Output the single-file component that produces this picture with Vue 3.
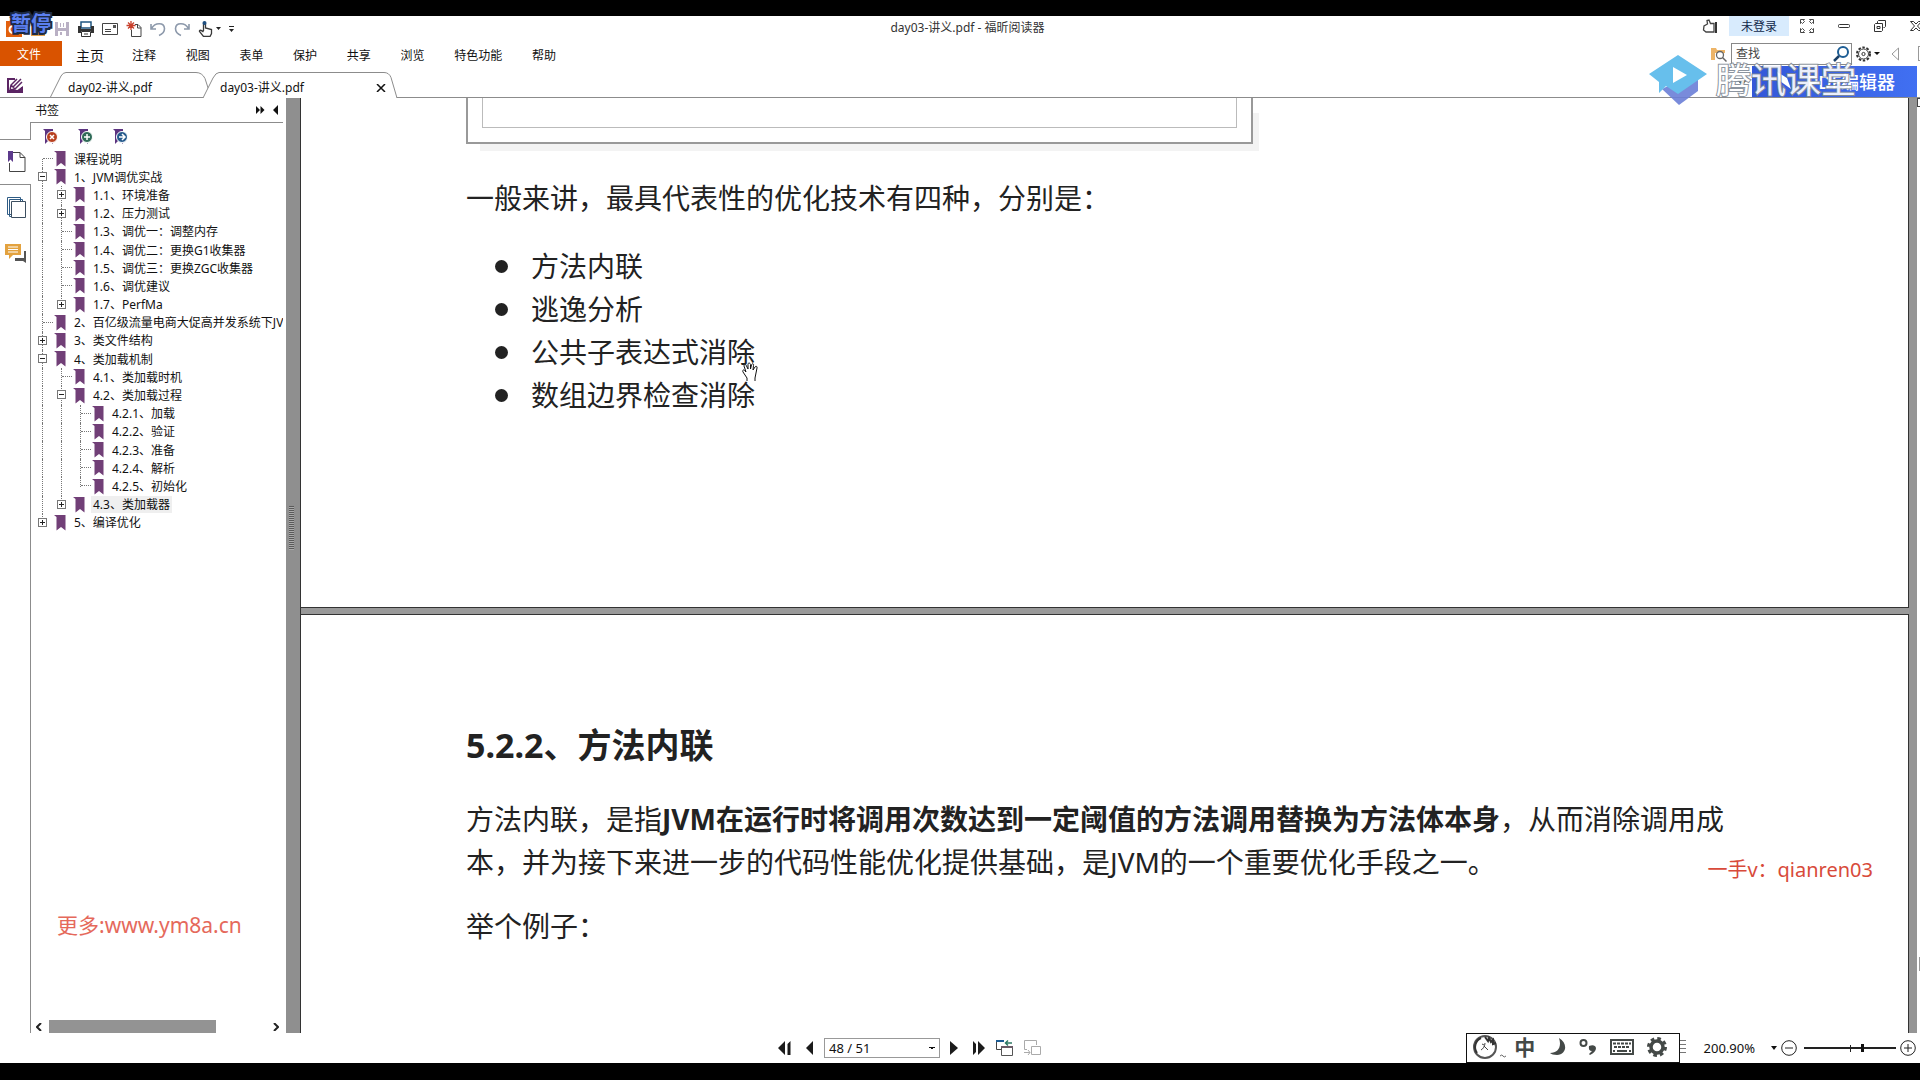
<template>
  <div class="screen">
    <div class="player-status">暂停</div>

    <header class="titlebar">
      <div class="quick">
        <button class="icon-btn logo" aria-label="Foxit">
          <svg width="16" height="16" viewBox="0 0 16 16"><rect width="16" height="16" fill="#e2600c" /><path d="M12 5H7a3 3 0 0 0 0 7h3V9" fill="none" stroke="#fff" stroke-width="2" /></svg>
        </button>
        <button class="icon-btn" aria-label="打开">
          <svg width="16" height="16" viewBox="0 0 16 16"><path d="M1 2h5l2 2h7v11H1z" fill="#e0a04a" /></svg>
        </button>
        <button class="icon-btn" aria-label="保存">
          <svg width="16" height="16" viewBox="0 0 16 16"><path d="M1 1h14v14H1z" fill="#b9b0c4" /><path d="M4 1h8v6H4zM4 10h8v5H4z" fill="#fff" /><path d="M6 2h1v4H6zM9 2h1v4H9zM6 11h2v3H6z" fill="#b9b0c4" /></svg>
        </button>
        <button class="icon-btn" aria-label="打印">
          <svg width="16" height="16" viewBox="0 0 16 16"><path d="M3 1h10v6H3z" fill="#fff" stroke="#1f5580" stroke-width="1.5" /><path d="M0 5h3v3h10V5h3v7h-3v-2H3v2H0z" fill="#333" /><path d="M3.500 10.500h9v5h-9zM6 13h4" fill="#fff" stroke="#333" /></svg>
        </button>
        <button class="icon-btn" aria-label="邮件">
          <svg width="16" height="16" viewBox="0 0 16 16"><path d="M.5 2.500h15v11H.5zM3 8.500h6M3 10.500h6" fill="none" stroke="#444" /><path d="M11 4h3v3h-3z" fill="#555" /></svg>
        </button>
        <button class="icon-btn" aria-label="新建">
          <svg width="16" height="16" viewBox="0 0 16 16"><path d="M9 3.500h3l3 3v9H5.500V9M11.500 3.500v3.500H15" fill="none" stroke="#444" /><path d="M5 0v9M.5 4.500h9M2 1.500l6 6M8 1.500l-6 6" stroke="#c8402c" stroke-width="1.300" /></svg>
        </button>
        <button class="icon-btn" aria-label="撤销">
          <svg width="16" height="16" viewBox="0 0 16 16"><path d="M1 3v5h5M1.500 7.500C5 1.500 14 1 14.500 7.500c0 4-3 6-5.500 7" fill="none" stroke="#8d99ab" stroke-width="1.600" /></svg>
        </button>
        <button class="icon-btn" aria-label="重做">
          <svg width="16" height="16" viewBox="0 0 16 16"><path d="M15 3v5h-5M14.500 7.500C11 1.500 2 1 1.500 7.500c0 4 3 6 5.500 7" fill="none" stroke="#8d99ab" stroke-width="1.600" /></svg>
        </button>
        <button class="icon-btn hand" aria-label="手型">
          <svg width="24" height="16" viewBox="0 0 24 16"><path d="M5.500 10V2.500c0-1.500 2-1.500 2 0V7l6 1.500v4L12 15.500H5.500L1.500 10.500C1 9 3 8.500 5.500 11" fill="#fff" stroke="#3a3a3a" stroke-width="1.300" /><circle cx="6.500" cy="2" r="2" fill="#1d4e80" /><path d="M18 6h5l-2.500 3z" fill="#222" /></svg>
        </button>
        <button class="icon-btn more" aria-label="更多">
          <svg width="8" height="16" viewBox="0 0 8 16"><path d="M1 5.500h5" stroke="#222" /><path d="M1 8h5l-2.500 3z" fill="#222" /></svg>
        </button>
      </div>
      <h1 class="doc-title">day03-讲义.pdf - 福昕阅读器</h1>
      <div class="window-tools">
        <button class="icon-btn" aria-label="点赞">
          <svg width="16" height="16" viewBox="0 0 16 16"><path d="M4 14H12V5.500H8.500L7 2 5 2.500 5.500 6 2 8l-.5 4z" fill="none" stroke="#444" stroke-width="1.300" /><path d="M13 4h2v11h-2z" fill="#333" /></svg>
        </button>
        <button class="login">未登录</button>
        <button class="icon-btn" aria-label="全屏">
          <svg width="14" height="14" viewBox="0 0 14 14" fill="none" stroke="#444"><path d="M.5 4.500v-4h4l-1 1 1 1-2 2-1-1zM9.500.5h4v4l-1-1-1 1-2-2 1-1zM.5 9.500v4h4l-1-1 1-1-2-2-1 1zM13.500 9.500v4h-4l1-1-1-1 2-2 1 1z" /></svg>
        </button>
        <button class="icon-btn" aria-label="最小化">
          <svg width="12" height="14" viewBox="0 0 12 14"><rect x=".5" y="5.500" width="11" height="3" rx="1" fill="none" stroke="#333" /></svg>
        </button>
        <button class="icon-btn" aria-label="还原">
          <svg width="12" height="12" viewBox="0 0 12 12" fill="none" stroke="#333"><path d="M3.500 3V1.500l1-1h7v6l-1 1H9.500M.5 4.500l1-1h7v7l-1 1h-7zM3 6.500h3v2H3z" /></svg>
        </button>
        <button class="icon-btn" aria-label="关闭">
          <svg width="12" height="12" viewBox="0 0 12 12"><path d="M.5 1.500h3L6 4l2.500-2.500h3L7.500 6l4 4.500h-3L6 8l-2.500 2.500h-3L4.500 6z" fill="none" stroke="#333" /></svg>
        </button>
      </div>
    </header>

    <nav class="menubar">
      <button class="file-menu">文件</button>
      <button class="menu home">主页</button>
      <div class="menus">
        <button v-for="item in menus" :key="item" class="menu">{{ item }}</button>
      </div>
      <div class="search-area">
        <svg width="17" height="16" viewBox="0 0 17 16"><path d="M1 2h5l1 2h8v3H5v7H1z" fill="#edb467" /><circle cx="10" cy="9" r="3.500" fill="#fff" stroke="#666" stroke-width="1.300" /><path d="M12.500 11.500l4 4" stroke="#666" stroke-width="1.500" /></svg>
        <label class="search">
          <input v-model="keyword" type="text" placeholder="查找" aria-label="查找" />
          <svg width="16" height="16" viewBox="0 0 16 16"><circle cx="10" cy="6" r="5" fill="none" stroke="#1d5d94" stroke-width="2" /><path d="M6 10l-5 5" stroke="#1b4168" stroke-width="2.500" /></svg>
        </label>
        <button class="icon-btn" aria-label="设置">
          <svg width="24" height="16" viewBox="0 0 24 16"><circle cx="7.500" cy="8" r="6.500" fill="none" stroke="#333" stroke-width="2" stroke-dasharray="2.500 1.600" /><circle cx="7.500" cy="8" r="5" fill="#fff" stroke="#444" /><circle cx="7.500" cy="8" r="1.600" fill="none" stroke="#333" /><path d="M18 6h6l-3 3z" fill="#111" /></svg>
        </button>
        <svg class="prev-hit" width="8" height="14" viewBox="0 0 8 14"><path d="M7.500 1v12L1 7z" fill="none" stroke="#999" /></svg>
        <span class="next-hit"></span>
      </div>
    </nav>

    <div class="tabbar">
      <button class="icon-btn edit-pen" aria-label="编辑">
        <svg width="17" height="16" viewBox="0 0 17 16"><path d="M0 1h8v2H2v10h12v-3h2v6H0z" fill="#5b2463" /><path d="M3 13l1-5 6-6M8 12l7-7M4 8l4 4-5 1M6 10l8-8" fill="none" stroke="#5b2463" stroke-width="1.500" /><path d="M9 14l7-5v6H9z" fill="#5b2463" /></svg>
      </button>
      <button class="tab first">
        <svg width="162" height="25" viewBox="0 0 162 25"><path d="M.5 25L11 4Q13 .5 16 .5h130q6 0 9 6l6 18.500" fill="#fff" stroke="#8c8c8c" /></svg>
        <span>day02-讲义.pdf</span>
      </button>
      <button class="tab current">
        <svg width="195" height="26" viewBox="0 0 195 26"><path d="M0 26L10 6Q13 .5 16 .5h165q5 0 7 5l6 20.500" fill="#fff" stroke="#8c8c8c" /></svg>
        <span>day03-讲义.pdf</span>
        <svg class="close" width="10" height="8" viewBox="0 0 10 8"><path d="M1 0l8 8M9 0L1 8" stroke="#111" stroke-width="1.500" /></svg>
      </button>
      <svg class="tab-caret" width="10" height="5" viewBox="0 0 10 5"><path d="M0 0h10L5 5z" fill="#111" /></svg>
      <button class="editor-ad">
        <svg width="16" height="18" viewBox="0 0 16 18"><path d="M1 0l10 6 4 11L4 9z" fill="#fff" /></svg>
        <span>PDF编辑器</span>
      </button>
    </div>

    <main class="workspace">
      <aside class="sidebar">
        <div class="panel-head">
          <span>书签</span>
          <svg width="24" height="10" viewBox="0 0 24 10"><path d="M0 1l4 4-4 4zM4.500 1l4 4-4 4zM22 0v10l-5-5z" fill="#111" /></svg>
        </div>
        <div class="panel-body">
          <div class="strip">
            <div class="strip-top"></div>
            <button class="strip-btn selected" aria-label="书签">
              <svg width="20" height="22" viewBox="0 0 20 22"><path d="M4 1.500h9l5 5v14H2.500V12M13 1.500v5h5" fill="none" stroke="#444" /><path d="M1 0h5v11L3.500 8.500 1 11z" fill="#5c3a8c" /></svg>
            </button>
            <div class="strip-rest">
              <button class="strip-btn" aria-label="页面">
                <svg width="20" height="22" viewBox="0 0 20 22" fill="#fff" stroke="#2f5c85"><path d="M.5.5h13v17H.5zM2.500 2.500h13v17h-13z" /><path d="M4.500 4.500h14v16h-14z" stroke="#3d4f60" /></svg>
              </button>
              <button class="strip-btn comment" aria-label="注释">
                <svg width="22" height="22" viewBox="0 0 22 22"><path d="M0 1h16v11H8l-4 4v-4H0z" fill="#e3a23f" /><path d="M3 4h10M3 6.500h10M3 9h10" stroke="#fff" /><path d="M19 8h2v12l-3-2h-8v-3h9z" fill="#555" /></svg>
              </button>
            </div>
          </div>
          <div class="bookmarks">
            <div class="bookmark-tools">
              <button v-for="tool in bookmarkTools" :key="tool.name" class="icon-btn" :aria-label="tool.name">
                <svg width="15" height="16" viewBox="0 0 15 16"><path d="M0 0h10v15l-4-4-4 4V2z" fill="#5c3480" /><circle cx="9" cy="8" r="5.500" :fill="tool.color" stroke="#fff" /><path :d="tool.path" fill="none" stroke="#fff" stroke-width="1.500" /></svg>
              </button>
            </div>
            <ul class="tree">
              <li v-for="node in tree" :key="node.text">
                <span v-for="(mark, i) in node.marks" :key="i" class="guide" :class="guideClass[mark]"></span>
                <svg class="flag" width="12" height="16" viewBox="0 0 12 16"><path d="M0 0h11.500v15.500L7 12l-4.500 3.500V2z" fill="#713f77" /></svg>
                <span class="node-text" :class="{ picked: node.picked }">{{ node.text }}</span>
              </li>
            </ul>
            <div class="hscroll">
              <svg width="6" height="8" viewBox="0 0 6 8"><path d="M5 0L1 4l4 4" fill="none" stroke="#222" stroke-width="2" /></svg>
              <div class="track"><div class="thumb"></div></div>
              <svg width="6" height="8" viewBox="0 0 6 8"><path d="M1 0l4 4-4 4" fill="none" stroke="#222" stroke-width="2" /></svg>
            </div>
          </div>
        </div>
        <div class="watermark more-link">更多:www.ym8a.cn</div>
      </aside>

      <div class="splitter"><div class="grip"></div></div>

      <section class="viewer">
        <article class="page page-top">
          <div class="figure"><div class="figure-inner"></div></div>
          <p>一般来讲，最具代表性的优化技术有四种，分别是：</p>
          <ul class="points">
            <li v-for="point in points" :key="point">{{ point }}</li>
          </ul>
        </article>
        <article class="page page-next">
          <h2>5.2.2、方法内联</h2>
          <p>方法内联，是指<strong>JVM在运行时将调用次数达到一定阈值的方法调用替换为方法体本身</strong>，从而消除调用成本，并为接下来进一步的代码性能优化提供基础，是JVM的一个重要优化手段之一。</p>
          <p>举个例子：</p>
        </article>
        <svg class="grab" width="17" height="20" viewBox="0 0 17 20"><path d="M5 19v-3L1 10c-1-2 1-3 2-1l1 1-2-6c0-2 2-2 2.500 0L6 7V2.500c0-2 2-2 2.500 0V7l1-4c.5-2 2.500-1.500 2 .5L11 8l2-3c1-1.500 2.500-.5 2 1l-2 10v3" fill="#fff" stroke="#111" /></svg>
        <div class="watermark contact">一手v：qianren03</div>
      </section>
      <div class="vscroll"><span class="up"></span><span class="bar"></span></div>
    </main>

    <footer class="statusbar">
      <div class="pager">
        <button class="icon-btn" aria-label="首页"><svg width="14" height="14" viewBox="0 0 14 14"><path d="M7 0v14L0 7zM12.500 0v14h-3V3z" fill="#1b1b1b" /></svg></button>
        <button class="icon-btn step" aria-label="上一页"><svg width="8" height="14" viewBox="0 0 8 14"><path d="M7 0v14L0 7z" fill="#1b1b1b" /></svg></button>
        <select aria-label="页码"><option>48 / 51</option></select>
        <button class="icon-btn" aria-label="下一页"><svg width="8" height="14" viewBox="0 0 8 14"><path d="M0 0v14l8-7z" fill="#1b1b1b" /></svg></button>
        <button class="icon-btn step" aria-label="末页"><svg width="14" height="14" viewBox="0 0 14 14"><path d="M1 0l3 3v8l-3 3zM6 0v14l7-7z" fill="#1b1b1b" /></svg></button>
        <button class="icon-btn" aria-label="上一视图"><svg width="18" height="16" viewBox="0 0 18 16"><path d="M6 9.500H.5v-9H8" fill="none" stroke="#444" /><path d="M0 0h8v2H0z" fill="#1d5d94" /><path d="M5.500 6.500h11v9h-11z" fill="#fff" stroke="#555" /><path d="M5 6h12v2H5z" fill="#6a5a66" /><path d="M16 3H9.500M12 .5L9.500 3 12 5.500" fill="none" stroke="#2f7a66" stroke-width="1.500" /></svg></button>
        <button class="icon-btn" aria-label="下一视图"><svg width="18" height="16" viewBox="0 0 18 16" fill="none" stroke="#aaa"><path d="M3 9.500H.5v-9h12V5M7.500 6.500h9v8h-9zM0 12.500h6M4 10l2 2.500L4 15" /></svg></button>
      </div>
      <div class="ime">
        <svg width="34" height="24" viewBox="0 0 34 24"><circle cx="13" cy="12" r="11" fill="none" stroke="#555" stroke-width="2" /><path d="M5 18A10 10 0 0 1 9 3M13 2l3 4 1-3 2 4 2-2v4l3-1" fill="none" stroke="#333" stroke-width="2" /><path d="M10 9l2 1M13 8c0 3-2 6-4 7M12 11l4 4" fill="none" stroke="#444" /><path d="M28 21q2-2 3 0t3 0" fill="none" stroke="#666" /></svg>
        <span class="zh">中</span>
        <svg width="16" height="18" viewBox="0 0 16 18"><path d="M9 0c9 5 8 16-2 17-3 0-6-1-7-2 8 0 12-6 9-15z" fill="#444947" /></svg>
        <svg width="18" height="18" viewBox="0 0 18 18"><circle cx="4.500" cy="5" r="3" fill="none" stroke="#444947" stroke-width="2" /><path d="M10 8q6-2 7 2 0 4-6 7l-1-1 3-3q-4 0-3-5z" fill="#444947" /></svg>
        <svg width="24" height="16" viewBox="0 0 24 16"><path d="M1 1h22v14H1z" fill="#fff" stroke="#444947" stroke-width="2" /><path d="M3 4.500h18M4 8h16" stroke="#444947" stroke-width="2" stroke-dasharray="3 1" /><path d="M3 12h2M7 12h10M19 12h2" stroke="#444947" stroke-width="2" /></svg>
        <svg width="20" height="20" viewBox="0 0 20 20"><circle cx="10" cy="10" r="8.500" fill="none" stroke="#444947" stroke-width="3" stroke-dasharray="3.600 3.080" /><circle cx="10" cy="10" r="6" fill="none" stroke="#444947" stroke-width="3.500" /></svg>
      </div>
      <div class="ime-edge"></div>
      <label class="zoom-value" for="zoom">200.90%</label>
      <svg class="zoom-caret" width="6" height="4" viewBox="0 0 6 4"><path d="M0 0h6L3 4z" fill="#111" /></svg>
      <button class="icon-btn" aria-label="缩小"><svg width="16" height="16" viewBox="0 0 16 16" fill="none" stroke="#222"><circle cx="8" cy="8" r="7.300" /><path d="M4 8h8" /></svg></button>
      <input id="zoom" v-model="zoom" class="zoom-slider" type="range" min="0" max="100" />
      <button class="icon-btn zoom-in" aria-label="放大"><svg width="16" height="16" viewBox="0 0 16 16" fill="none" stroke="#222"><circle cx="8" cy="8" r="7.300" /><path d="M4 8h8M8 4v8" /></svg></button>
    </footer>

    <div class="brand">
      <svg width="58" height="50" viewBox="0 0 58 50">
        <path d="M13 34l16-8 20-4v14L30 50z" fill="#6b7fd8" />
        <path d="M29 0l29 19-29 20-12-8-7 7V27L0 19z" fill="#57b9ea" />
        <path d="M24 12v16l14-8z" fill="#fff" />
      </svg>
      <span>腾讯课堂</span>
    </div>
  </div>
</template>

<script setup>
import { ref } from 'vue';

const keyword = ref('');
const zoom = ref(64);

const menus = ['注释', '视图', '表单', '保护', '共享', '浏览', '特色功能', '帮助'];

const bookmarkTools = [
  { name: '删除书签', color: '#b8401f', path: 'M7 6l4 4M11 6l-4 4' },
  { name: '添加书签', color: '#2f6b58', path: 'M9 5v6M6 8h6' },
  { name: '展开书签', color: '#255a8c', path: 'M6 8h6M9 5l3 3-3 3' }
];

// one mark per indent level
const guideClass = {
  '|': ['line'],
  t: ['line', 'arm'],
  s: ['start', 'arm'],
  e: ['end', 'arm'],
  '+': ['line', 'toggle', 'plus'],
  '-': ['line', 'toggle'],
  x: ['end', 'toggle', 'plus']
};

const tree = [
  { marks: 's', text: '课程说明' },
  { marks: '-', text: '1、JVM调优实战' },
  { marks: '|+', text: '1.1、环境准备' },
  { marks: '|+', text: '1.2、压力测试' },
  { marks: '|t', text: '1.3、调优一：调整内存' },
  { marks: '|t', text: '1.4、调优二：更换G1收集器' },
  { marks: '|t', text: '1.5、调优三：更换ZGC收集器' },
  { marks: '|t', text: '1.6、调优建议' },
  { marks: '|x', text: '1.7、PerfMa' },
  { marks: 't', text: '2、百亿级流量电商大促高并发系统下JV' },
  { marks: '+', text: '3、类文件结构' },
  { marks: '-', text: '4、类加载机制' },
  { marks: '|t', text: '4.1、类加载时机' },
  { marks: '|-', text: '4.2、类加载过程' },
  { marks: '||t', text: '4.2.1、加载' },
  { marks: '||t', text: '4.2.2、验证' },
  { marks: '||t', text: '4.2.3、准备' },
  { marks: '||t', text: '4.2.4、解析' },
  { marks: '||e', text: '4.2.5、初始化' },
  { marks: '|x', text: '4.3、类加载器', picked: true },
  { marks: 'x', text: '5、编译优化' }
];

const points = ['方法内联', '逃逸分析', '公共子表达式消除', '数组边界检查消除'];
</script>

<style>
body {
  margin: 0;
  background: #000;
}
</style>

<style scoped>
.screen {
  position: relative;
  box-sizing: border-box;
  height: 100vh;
  padding: 16px 0 17px;
  display: flex;
  flex-direction: column;
  overflow: hidden;
  background: #000;
  color: #111;
  font-family: "Noto Sans", "Noto Sans CJK SC", sans-serif;
  font-size: 12px;
}

button, input, select {
  font: inherit;
  color: inherit;
  border: 0;
  padding: 0;
  margin: 0;
  background: none;
}

svg {
  display: block;
  flex: none;
}

ul, p, h1, h2 {
  margin: 0;
  padding: 0;
  list-style: none;
}

.player-status {
  position: absolute;
  left: 11px;
  top: 9px;
  z-index: 5;
  font-size: 20px;
  line-height: 30px;
  font-weight: 700;
  color: #5b7ff0;
  -webkit-text-stroke: 4px #1d2a44;
  paint-order: stroke fill;
}

/* title row */
.titlebar {
  display: grid;
  grid-template-columns: 1fr auto 1fr;
  height: 25px;
  background: #fff;
}

.quick {
  display: flex;
  align-items: center;
  gap: 8px;
  padding: 0 0 0 6px;
}

.quick .more {
  margin-left: -2px;
}

.doc-title {
  padding-left: 15px;
  font-size: 12px;
  font-weight: 400;
  line-height: 24px;
  color: #333;
}

.window-tools {
  display: flex;
  justify-content: flex-end;
  align-items: center;
  gap: 24px;
  height: 20px;
  margin-right: -2px;
}

.login {
  width: 60px;
  height: 20px;
  margin: 0 -13px;
  background: #d8ebfd;
  color: #10284a;
}

/* menu row */
.menubar {
  display: flex;
  align-items: center;
  height: 25px;
  background: #fff;
}

.file-menu {
  width: 62px;
  height: 25px;
  padding-right: 4px;
  background: #d95300;
  color: #fff;
}

.menu {
  padding: 2px 0 0;
  white-space: nowrap;
}

.menu.home {
  margin: 0 28px 0 14px;
  font-size: 14px;
}

.menus {
  display: flex;
  justify-content: space-between;
  width: 424px;
}

.search-area {
  display: flex;
  align-items: center;
  gap: 4px;
  margin-left: auto;
}

.search {
  display: flex;
  align-items: center;
  box-sizing: border-box;
  width: 121px;
  height: 22px;
  padding: 0 2px 0 4px;
  border: 1px solid #888;
}

.search input {
  flex: 1;
  min-width: 0;
  outline: none;
}

.search input::placeholder {
  color: #444;
  opacity: 1;
}

.prev-hit {
  margin: 0 15px 0 7px;
}

.next-hit {
  width: 1px;
  height: 13px;
  border: 1px solid #999;
  border-right: 0;
}

/* tabs */
.tabbar {
  display: flex;
  align-items: flex-end;
  height: 31px;
  background: #fff;
  border-bottom: 1px solid #8c8c8c;
}

.edit-pen {
  margin: 0 26px 4px 7px;
}

.tab {
  position: relative;
  width: 162px;
  height: 25px;
  padding: 4px 0 0 18px;
  text-align: left;
}

.tab.current {
  width: 195px;
  margin-left: -9px;
  padding-left: 17px;
}

.tab svg {
  position: absolute;
  left: 0;
  top: 0;
}

.tab span {
  position: relative;
}

.tab .close {
  left: 173px;
  top: 12px;
}

.tab-caret {
  margin: 0 5px 12px auto;
}

.editor-ad {
  display: flex;
  align-items: center;
  justify-content: space-between;
  width: 165px;
  height: 31px;
  margin-right: 3px;
  padding: 0 22px 2px 24px;
  background: linear-gradient(90deg, #3357d8, #4170f2);
  color: #fff;
  font-size: 18px;
  font-weight: 500;
}

/* bookmarks panel */
.workspace {
  flex: 1;
  min-height: 0;
  display: flex;
  background: #fff;
}

.sidebar {
  position: relative;
  width: 286px;
  display: flex;
  flex-direction: column;
}

.panel-head {
  display: flex;
  justify-content: space-between;
  align-items: center;
  height: 24px;
  padding: 0 6px 0 35px;
}

.panel-body {
  flex: 1;
  min-height: 0;
  display: flex;
}

.strip {
  width: 31px;
  display: flex;
  flex-direction: column;
}

.strip-top {
  height: 17px;
  border-right: 1px solid #8c8c8c;
  border-bottom: 1px solid #8c8c8c;
}

.strip-btn {
  display: flex;
  width: 30px;
  height: 46px;
  padding-left: 7px;
  align-items: center;
}

.strip-btn.selected {
  height: 44px;
}

.strip-btn.comment {
  padding-left: 5px;
}

.strip-rest {
  flex: 1;
  border-right: 1px solid #8c8c8c;
  border-top: 1px solid #8c8c8c;
}

.bookmarks {
  flex: 1;
  min-width: 0;
  display: flex;
  flex-direction: column;
  margin-right: 3px;
  border-top: 1px solid #8c8c8c;
}

.bookmark-tools {
  display: flex;
  align-items: center;
  gap: 20px;
  height: 27px;
  padding-left: 12px;
}

.tree {
  display: grid;
  grid-template-rows: repeat(21, 1fr);
  height: 382px;
  padding-left: 2px;
  overflow: hidden;
}

.tree li {
  display: flex;
  align-items: center;
  white-space: nowrap;
  min-width: 0;
}

.guide {
  position: relative;
  flex: none;
  align-self: stretch;
  width: 19px;
}

.guide::before {
  content: "";
  position: absolute;
  left: 9px;
  top: 0;
  bottom: 0;
  border-left: 1px dotted #777;
}

.guide.start::before {
  top: 50%;
}

.guide.end::before {
  bottom: 50%;
}

.arm::after, .toggle::after {
  content: "";
  position: absolute;
  left: 10px;
  right: -1px;
  top: 8px;
  border-top: 1px dotted #777;
}

.toggle::after {
  left: 5px;
  right: auto;
  top: 4px;
  width: 7px;
  height: 7px;
  border: 1px solid #777;
  background: linear-gradient(#222, #222) center / 5px 1px no-repeat, #fff;
}

.toggle.plus::after {
  background: linear-gradient(#222, #222) center / 5px 1px no-repeat, linear-gradient(#222, #222) center / 1px 5px no-repeat, #fff;
}

.flag {
  margin: 0 6px 0 2px;
}

.node-text {
  padding: 0 2px;
  line-height: 17px;
}

.node-text.picked {
  background: #efefef;
}

.hscroll {
  display: flex;
  align-items: center;
  gap: 7px;
  margin-top: auto;
  padding: 0 4px 0 5px;
}

.track {
  flex: 1;
}

.thumb {
  width: 77%;
  height: 13px;
  background: #939393;
}

.watermark {
  position: absolute;
  white-space: nowrap;
}

.more-link {
  left: 57px;
  bottom: 93px;
  font-size: 21px;
  line-height: 30px;
  color: #e5695b;
}

.splitter {
  box-sizing: border-box;
  width: 15px;
  padding: 408px 0 0 3px;
  background: #8f8f8f;
  border-right: 1px solid #333;
}

.grip {
  width: 5px;
  height: 44px;
  background: repeating-linear-gradient(#5a5a5a 0 1px, #aaa 1px 2px);
}

/* document */
.viewer {
  position: relative;
  flex: 1;
  min-width: 0;
  display: flex;
  flex-direction: column;
  gap: 6px;
  overflow: hidden;
  background: #999;
  font-size: 28px;
  line-height: 43px;
  color: #222;
}

.page {
  padding: 0 165px;
  background: #fff;
  border-right: 1px solid #333;
}

.page-top {
  box-sizing: border-box;
  flex: none;
  height: 510px;
  border-bottom: 1px solid #333;
}

.page-next {
  flex: 1;
  padding-top: 109px;
  border-top: 1px solid #333;
}

.figure {
  box-sizing: border-box;
  width: 787px;
  height: 46px;
  margin-bottom: 33px;
  padding: 0 14px;
  border: 2px solid #999;
  border-top: 0;
  box-shadow: 10px 11px 0 -4px #f3f3f3;
}

.figure-inner {
  height: 29px;
  border: 1px solid #bbb;
  border-top: 0;
}

.points {
  margin-top: 25px;
}

.points li {
  display: flex;
  align-items: center;
  padding-left: 29px;
}

.points li::before {
  content: "";
  width: 13px;
  height: 13px;
  margin-right: 23px;
  border-radius: 50%;
  background: #222;
}

.page h2 {
  font-size: 34px;
  font-weight: 700;
  margin-bottom: 31px;
}

.page-next p {
  margin-bottom: 21px;
}

.grab {
  position: absolute;
  left: 441px;
  top: 264px;
}

.contact {
  right: 36px;
  bottom: 148px;
  font-size: 20px;
  line-height: 30px;
  color: #d84a3a;
}

.vscroll {
  display: flex;
  flex-direction: column;
  justify-content: space-between;
  align-items: flex-end;
  width: 3px;
  border-left: 8px solid #959595;
}

.up {
  width: 2px;
  height: 7px;
  border: 1px solid #444;
  border-right: 0;
}

.bar {
  width: 1px;
  height: 14px;
  margin-bottom: 62px;
  background: #999;
}

/* status row */
.statusbar {
  display: flex;
  align-items: center;
  height: 30px;
  background: #fff;
  font-size: 13px;
}

.pager {
  display: flex;
  align-items: center;
  gap: 10px;
  margin: 0 auto 0 778px;
}

.pager .step {
  margin-left: 4px;
}

.pager select {
  width: 116px;
  height: 20px;
  padding-left: 4px;
  border: 1px solid #999;
  border-radius: 0;
  appearance: none;
  background: linear-gradient(45deg, transparent 50%, #111 50%) right 7px center / 3px 3px no-repeat, linear-gradient(-45deg, transparent 50%, #111 50%) right 4px center / 3px 3px no-repeat, #fff;
}

.ime {
  display: flex;
  align-items: center;
  justify-content: space-between;
  box-sizing: border-box;
  width: 214px;
  height: 30px;
  padding: 0 12px 2px 5px;
  border: 1px solid #111;
}

.zh {
  margin: 0 2px 0 -4px;
  font-size: 21px;
  line-height: 26px;
  font-weight: 700;
  color: #444947;
}

.ime-edge {
  width: 6px;
  height: 16px;
  margin-right: 18px;
  background: repeating-linear-gradient(#777 0 1px, #fff 1px 4px);
}

.zoom-caret {
  margin: 0 4px 0 16px;
}

.zoom-slider {
  width: 92px;
  height: 16px;
  margin: 0 4px 0 7px;
  appearance: none;
  background: linear-gradient(#222, #222) center / 100% 2px no-repeat, linear-gradient(#222, #222) center / 1px 7px no-repeat;
}

.zoom-slider::-webkit-slider-thumb {
  appearance: none;
  width: 3px;
  height: 8px;
  background: #111;
}

.zoom-in {
  margin-right: 4px;
}

/* overlay logo */
.brand {
  position: absolute;
  right: 64px;
  top: 55px;
  display: flex;
  gap: 9px;
  opacity: 0.9;
}

.brand span {
  font-size: 35px;
  line-height: 50px;
  color: #fff;
  -webkit-text-stroke: 2px #808a96;
  paint-order: stroke fill;
}
</style>
